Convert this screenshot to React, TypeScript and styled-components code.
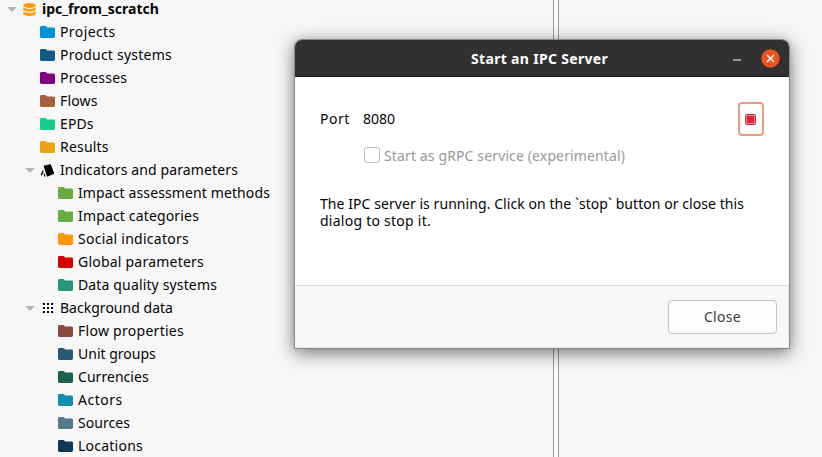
import React from "react";
import styled, { createGlobalStyle } from "styled-components";

const GlobalStyle = createGlobalStyle`
  * { box-sizing: border-box; }
  body {
    margin: 0;
    overflow: hidden;
    background: #f7f7f7;
    color: #050505;
    font: 14px "Noto Sans", "Open Sans", sans-serif;
  }
`;

const Desktop = styled.main`
  position: relative;
  display: flex;
  width: 822px;
  height: 457px;
  overflow: hidden;
`;

const Navigator = styled.ul`
  width: 553px;
  margin: -2px 0 0;
  padding: 0;
  list-style: none;
  flex: none;
`;

const Splitter = styled.div`
  width: 6px;
  flex: none;
  border: solid #9d9d9d;
  border-width: 0 1px;
  background: #fbfbfb;
`;

const Row = styled.li<{ $level: number }>`
  display: flex;
  align-items: center;
  height: 23px;
  padding-left: ${(p) => 7 + p.$level * 18}px;
`;

const Slot = styled.span<{ $width: number }>`
  display: flex;
  align-items: center;
  flex: none;
  width: ${(p) => p.$width}px;
  height: 23px;
  padding-bottom: 1px;
`;

const Label = styled.span<{ $tracking?: number; $bold?: boolean }>`
  white-space: pre;
  line-height: 21px;
  height: 23px;
  letter-spacing: ${(p) => p.$tracking ?? 0}px;
  font-weight: ${(p) => (p.$bold ? 700 : 400)};
`;

const Dialog = styled.section`
  position: absolute;
  left: 294px;
  top: 39px;
  width: 496px;
  height: 310px;
  display: flex;
  flex-direction: column;
  border: 1px solid #8b8b8b;
  border-radius: 8px 8px 0 0;
  background: #fff;
  overflow: hidden;
  box-shadow: 0 4px 18px rgba(0, 0, 0, 0.52), 0 0 6px rgba(0, 0, 0, 0.08);
`;

const TitleBar = styled.header`
  display: flex;
  align-items: center;
  height: 37px;
  flex: none;
  padding: 0 9px 0 176px;
  background: #333031;
  border-bottom: 1px solid #1d1b1c;
  color: #fff;
`;

const Title = styled.h1`
  margin: 0;
  flex: 1;
  padding-top: 1px;
  font-size: 14px;
  line-height: 36px;
  letter-spacing: 0.32px;
  white-space: pre;
`;

const WindowButton = styled.button<{ $width: number }>`
  display: flex;
  padding: 0;
  border: 0;
  background: none;
  width: ${(p) => p.$width}px;
`;

const Content = styled.div`
  height: 208px;
  flex: none;
  padding: 25px 25px 0;
`;

const PortRow = styled.div`
  display: flex;
  align-items: center;
  height: 34px;
`;

const PortLabel = styled(Label)`
  width: 43px;
`;

const PortValue = styled(Label)`
  flex: 1;
`;

const StopButton = styled.button`
  display: flex;
  align-items: center;
  justify-content: center;
  width: 26px;
  height: 34px;
  padding: 0 1px 0 0;
  border: 2px solid #eb9b80;
  border-radius: 4px;
  background: #fff;
`;

const Option = styled.label`
  display: flex;
  align-items: center;
  height: 23px;
  margin: 8px 0 0 44px;
  gap: 4px;
  color: #999;
`;

const OptionLabel = styled(Label)`
  line-height: 23px;
`;

const CheckBox = styled.span`
  width: 16px;
  height: 16px;
  flex: none;
  margin-bottom: 1px;
  border: 1px solid #bdbdbd;
  border-radius: 3px;
  background: #fff;
`;

const Message = styled.p`
  margin: 28px 0 0;
  line-height: 17px;
  white-space: pre;
`;

const MessageLine = styled.span<{ $tracking: number }>`
  display: block;
  letter-spacing: ${(p) => p.$tracking}px;
`;

const Footer = styled.footer`
  display: flex;
  flex: 1;
  justify-content: flex-end;
  padding: 14px 12px 0 0;
  border-top: 1px solid #d9d9d9;
  background: #f7f7f7;
  box-shadow: inset 0 -1px #e4e4e4, inset -1px 0 #ededed;
`;

const CloseButton = styled.button`
  width: 109px;
  height: 34px;
  padding: 0 0 1px;
  border: 1px solid #c3c3c3;
  border-radius: 4px;
  background: #fcfcfc;
  color: #3d3d3d;
  font: inherit;
  letter-spacing: 0.3px;
`;

const Caret = () => (
  <svg width="10" height="6" viewBox="0 0 10 6">
    <path d="M.2 1h9.600L5 5.900Z" fill="#b5b5b5" />
  </svg>
);

const Folder = ({ color }: { color: string }) => (
  <svg width="15" height="12" viewBox="0 0 15 12">
    <path
      d="M1.400 0h4.300l1.500 1.500h6.400A1.400 1.400 0 0 1 15 2.900v7.700a1.400 1.400 0 0 1-1.400 1.400H1.400A1.400 1.400 0 0 1 0 10.600V1.400A1.400 1.400 0 0 1 1.400 0Z"
      fill={color}
    />
  </svg>
);

const Database = () => (
  <svg width="13" height="13" viewBox="0 0 13 13" fill="#ff9a0c">
    <ellipse cx="6.500" cy="2.500" rx="6.200" ry="2.400" />
    <path d="M.3 4.300c1.300 1.300 3.700 1.700 6.200 1.700s4.900-.4 6.200-1.700v2c0 1.300-2.800 2.400-6.200 2.400S.3 7.600.3 6.300Z" />
    <path d="M.3 8.300c1.300 1.300 3.700 1.700 6.200 1.700s4.900-.4 6.200-1.700v2.100c0 1.400-2.800 2.500-6.200 2.500S.3 11.800.3 10.400Z" />
  </svg>
);

const Cards = () => (
  <svg width="15" height="13" viewBox="0 0 15 13">
    <path d="M4.500 1.400 9.900.2q.7-.1 1 .5l3.200 8.400q.2.700-.4 1l-5.900 2.300q-.7.200-1-.5L3.800 2.400q-.1-.8.7-1Z" />
    <path d="M3.200 5v3.500L1.900 11.700l-.7-.4q-.5-.4-.3-1Z" />
    <path d="M3.900 8.100 5.600 12.500H4.500q-.6-.1-.6-.8Z" />
  </svg>
);

const Dots = () => (
  <svg width="15" height="12" viewBox="0 0 15 12">
    {[3, 7, 11].map((x) =>
      [1, 5, 9].map((y) => <rect key={`${x}-${y}`} x={x} y={y} width="2" height="2" />)
    )}
  </svg>
);

type Item = { text: string; level: number; tracking: number; color?: string; icon?: React.ReactNode };

const items: Item[] = [
  { text: "ipc_from_scratch", level: 0, tracking: 0.026, icon: <Database /> },
  { text: "Projects", level: 1, tracking: 0.4, color: "#0090d9" },
  { text: "Product systems", level: 1, tracking: 0.24, color: "#135985" },
  { text: "Processes", level: 1, tracking: 0.25, color: "#800080" },
  { text: "Flows", level: 1, tracking: 0.14, color: "#a66041" },
  { text: "EPDs", level: 1, tracking: 0.1, color: "#12ce8a" },
  { text: "Results", level: 1, tracking: 0.2, color: "#eda211" },
  { text: "Indicators and parameters", level: 1, tracking: 0.126, icon: <Cards /> },
  { text: "Impact assessment methods", level: 2, tracking: 0.116, color: "#67ad42" },
  { text: "Impact categories", level: 2, tracking: 0.158, color: "#67ad42" },
  { text: "Social indicators", level: 2, tracking: 0.25, color: "#ff9800" },
  { text: "Global parameters", level: 2, tracking: 0.22, color: "#d50000" },
  { text: "Data quality systems", level: 2, tracking: 0.145, color: "#27967b" },
  { text: "Background data", level: 1, tracking: 0.02, icon: <Dots /> },
  { text: "Flow properties", level: 2, tracking: 0.277, color: "#884d3f" },
  { text: "Unit groups", level: 2, tracking: 0, color: "#2a5873" },
  { text: "Currencies", level: 2, tracking: 0.04, color: "#19624e" },
  { text: "Actors", level: 2, tracking: 0.5, color: "#1489b3" },
  { text: "Sources", level: 2, tracking: 0.05, color: "#55788b" },
  { text: "Locations", level: 2, tracking: 0.236, color: "#0d3859" },
];

export default function App() {
  return (
    <Desktop>
      <GlobalStyle />
      <Navigator>
        {items.map((item) => (
          <Row key={item.text} $level={item.level}>
            <Slot $width={item.level === 0 ? 16 : 15}>{item.icon && <Caret />}</Slot>
            <Slot $width={item.level === 0 ? 19 : 20}>
              {item.icon ?? <Folder color={item.color!} />}
            </Slot>
            <Label $tracking={item.tracking} $bold={item.level === 0}>
              {item.text}
            </Label>
          </Row>
        ))}
      </Navigator>
      <Splitter />
      <Dialog>
        <TitleBar>
          <Title>Start an IPC Server</Title>
          <WindowButton $width={28} aria-label="Minimize">
            <svg width="8" height="6" viewBox="0 0 8 6">
              <path d="M0 5h8" stroke="#fff" strokeWidth="1.200" />
            </svg>
          </WindowButton>
          <WindowButton $width={19} aria-label="Close window">
            <svg width="19" height="19" viewBox="0 0 19 19">
              <circle cx="9.500" cy="9.500" r="9.200" fill="#e95420" />
              <path d="m6 6 7 7m0-7-7 7" stroke="#fff" strokeWidth="1.400" />
            </svg>
          </WindowButton>
        </TitleBar>
        <Content>
          <PortRow>
            <PortLabel $tracking={0.55}>Port</PortLabel>
            <PortValue>8080</PortValue>
            <StopButton aria-label="Stop">
              <svg width="11" height="11" viewBox="0 0 11 11">
                <rect x=".5" y=".5" width="10" height="10" rx="1" fill="#f3a6ad" stroke="#b32d40" />
                <rect x="1.800" y="1.800" width="7.400" height="7.400" fill="#da2830" />
              </svg>
            </StopButton>
          </PortRow>
          <Option>
            <CheckBox />
            <OptionLabel $tracking={0.13}>Start as gRPC service (experimental)</OptionLabel>
          </Option>
          <Message>
            <MessageLine $tracking={0.063}>
              The IPC server is running. Click on the `stop` button or close this
            </MessageLine>
            <MessageLine $tracking={0.25}>dialog to stop it.</MessageLine>
          </Message>
        </Content>
        <Footer>
          <CloseButton>Close</CloseButton>
        </Footer>
      </Dialog>
    </Desktop>
  );
}
